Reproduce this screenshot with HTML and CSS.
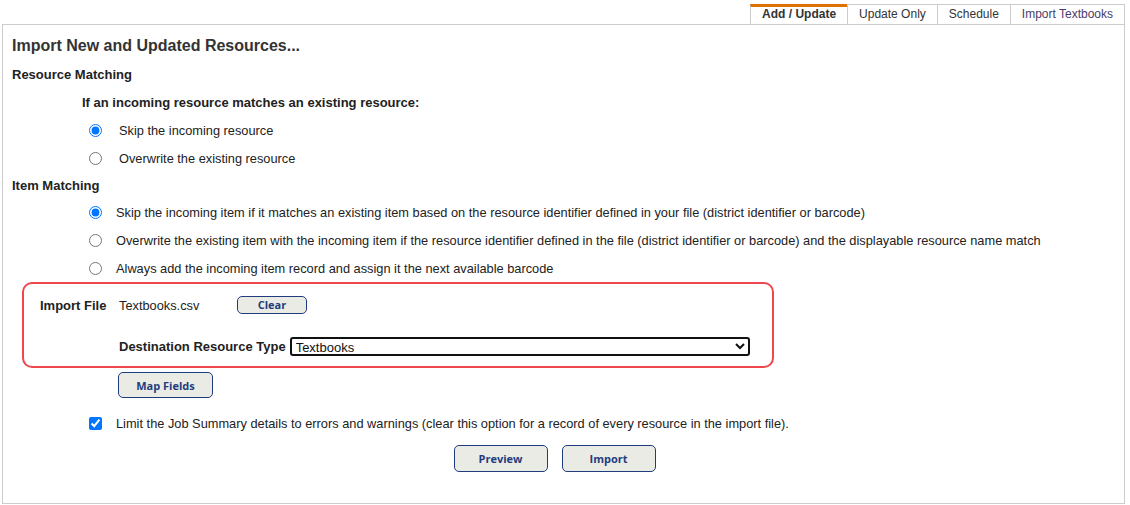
FILE: index.html
```html
<!DOCTYPE html>
<html lang="en">
<head>
  <meta charset="UTF-8">
  <title>Import Resources</title>
  <link rel="stylesheet" href="styles.css">
</head>
<body>
  <div class="tabs">
    <span class="tab active">Add / Update</span>
    <span class="tab">Update Only</span>
    <span class="tab">Schedule</span>
    <span class="tab visited">Import Textbooks</span>
  </div>

  <div class="panel">
    <div class="row title">Import New and Updated Resources...</div>

    <div class="row heading">Resource Matching</div>
    <div class="row question">If an incoming resource matches an existing resource:</div>
    <label class="row option wide"><input type="radio" name="res" checked> Skip the incoming resource</label>
    <label class="row option wide"><input type="radio" name="res"> Overwrite the existing resource</label>

    <div class="row heading item">Item Matching</div>
    <label class="row option"><input type="radio" name="item" checked> Skip the incoming item if it matches an existing item based on the resource identifier defined in your file (district identifier or barcode)</label>
    <label class="row option"><input type="radio" name="item"> Overwrite the existing item with the incoming item if the resource identifier defined in the file (district identifier or barcode) and the displayable resource name match</label>
    <label class="row option"><input type="radio" name="item"> Always add the incoming item record and assign it the next available barcode</label>

    <div class="file-box">
      <div class="row">
        <span class="label file-label">Import File</span>
        <span class="file-name">Textbooks.csv</span>
        <button class="btn small">Clear</button>
      </div>
      <div class="row dest">
        <span class="label">Destination Resource Type</span>
        <select class="type-select">
          <option>Textbooks</option>
        </select>
      </div>
    </div>

    <div class="map-row">
      <button class="btn map">Map Fields</button>
    </div>

    <label class="row option check"><input type="checkbox" checked> Limit the Job Summary details to errors and warnings (clear this option for a record of every resource in the import file).</label>

    <div class="actions">
      <button class="btn wide-btn">Preview</button>
      <button class="btn wide-btn">Import</button>
    </div>
  </div>
</body>
</html>
```

FILE: styles.css
```css
body {
  margin: 0;
  font-family: "Liberation Sans", Arial, sans-serif;
  font-size: 13px;
  color: #222;
  background: #fff;
}
.tabs {
  display: flex;
  justify-content: flex-end;
  margin: 4px 5px 0 0;
  font-size: 12px;
}
.tab {
  height: 20px;
  line-height: 19px;
  padding: 0 11px;
  border: 1px solid #ccc;
  border-bottom: none;
  margin-left: -1px;
  color: #333;
  box-sizing: border-box;
}
.tab.active {
  border-top: 3px solid #e07000;
  line-height: 15px;
  font-weight: bold;
  padding: 0 11px;
}
.tab.visited {
  color: #4b3b6b;
}
.panel {
  margin: 0 5px 0 2px;
  border: 1px solid #ccc;
  height: 480px;
  padding: 7px 9px 0 9px;
  box-sizing: border-box;
}
.row {
  display: flex;
  align-items: center;
  height: 28px;
}
.title {
  font-size: 16px;
  font-weight: bold;
  color: #333;
}
.heading {
  font-weight: bold;
}
.heading.item {
  height: 26px;
}
.question {
  font-weight: bold;
  padding-left: 70px;
}
.option {
  padding-left: 77px;
  white-space: nowrap;
  font-size: 12.8px;
}
.option input {
  margin: 0 14px 0 0;
  width: 13px;
  height: 13px;
}
.option.wide input {
  margin-right: 17px;
}
.file-box {
  margin-left: 10px;
  width: 752px;
  height: 86px;
  border: 2px solid #f0474d;
  border-radius: 10px;
  box-sizing: border-box;
  padding: 7px 22px 0 16px;
}
.label {
  font-weight: bold;
}
.file-label {
  width: 79px;
}
.file-name {
  width: 118px;
  font-size: 12.8px;
}
.dest {
  margin-top: 13px;
  padding-left: 79px;
}
.dest .label {
  margin-right: 4px;
}
.type-select {
  flex: 1;
  height: 19px;
  border: 2px solid #111;
  border-radius: 3px;
  font-family: "Liberation Sans", Arial, sans-serif;
  font-size: 13px;
  color: #111;
  padding: 0;
  background: #fff;
}
.btn {
  font-family: "Open Sans", sans-serif;
  font-size: 11px;
  font-weight: bold;
  color: #1f3c7e;
  background: #ebebe5;
  border: 1px solid #1f3c7e;
  border-radius: 5px;
  padding: 0;
}
.btn.small {
  width: 70px;
  height: 18px;
  line-height: 14px;
}
.map-row {
  padding: 4px 0 0 106px;
  height: 30px;
}
.btn.map {
  width: 95px;
  height: 26px;
}
.check {
  margin-top: 7px;
}
.actions {
  display: flex;
  justify-content: center;
  gap: 14px;
  padding-right: 18px;
  margin-top: 8px;
}
.btn.wide-btn {
  width: 94px;
  height: 27px;
}
```
